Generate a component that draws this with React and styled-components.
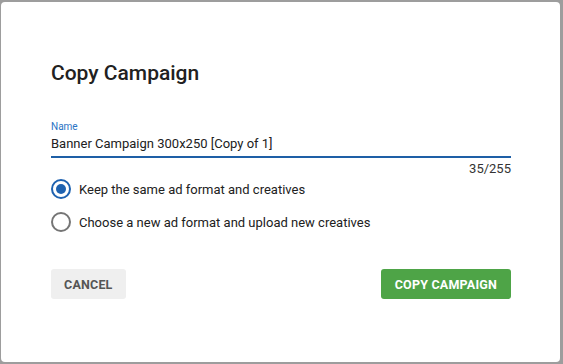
import React, { useState } from "react";
import styled, { createGlobalStyle } from "styled-components";

const GlobalStyle = createGlobalStyle`
  html, body {
    margin: 0;
    padding: 0;
    background: #9d9d9d;
    font-family: Roboto, "Liberation Sans", sans-serif;
  }
`;

const Backdrop = styled.div`
  width: 563px;
  height: 364px;
  padding: 2px 3px 2px 1px;
  box-sizing: border-box;
`;

const Dialog = styled.div`
  width: 100%;
  height: 100%;
  background: #fff;
  border-radius: 4px;
  box-sizing: border-box;
  padding: 57px 49px 0 50px;
  display: flex;
  flex-direction: column;
`;

const Title = styled.h2`
  margin: 0;
  font-size: 21px;
  line-height: 28px;
  font-weight: 500;
  color: #212121;
`;

const Field = styled.div`
  margin-top: 34px;
  display: flex;
  flex-direction: column;
`;

const Label = styled.label`
  font-size: 10px;
  line-height: 12px;
  color: #2b73c4;
`;

const Input = styled.input`
  border: none;
  border-bottom: 2px solid #1e5fa6;
  padding: 2px 0 4px;
  font-family: inherit;
  font-size: 13px;
  line-height: 17px;
  color: #212121;
  outline: none;
  background: transparent;
`;

const Counter = styled.div`
  align-self: flex-end;
  font-size: 13px;
  line-height: 15px;
  margin-top: 3px;
  color: #333;
`;

const Options = styled.div`
  display: flex;
  flex-direction: column;
  gap: 13px;
  margin-top: 3px;
`;

const Option = styled.label`
  display: flex;
  align-items: center;
  gap: 8px;
  font-size: 13px;
  color: #212121;
  cursor: pointer;
`;

const Radio = styled.span`
  width: 20px;
  height: 20px;
  box-sizing: border-box;
  border-radius: 50%;
  border: 2px solid ${(p) => (p.checked ? "#1e62b0" : "#757575")};
  display: flex;
  align-items: center;
  justify-content: center;
  &::after {
    content: "";
    width: 10px;
    height: 10px;
    border-radius: 50%;
    background: #1e62b0;
    display: ${(p) => (p.checked ? "block" : "none")};
  }
`;

const Actions = styled.div`
  display: flex;
  justify-content: space-between;
  margin-top: 37px;
`;

const Button = styled.button`
  height: 30px;
  padding: 0 ${(p) => (p.primary ? "14px" : "13px")};
  border: none;
  border-radius: 3px;
  font-family: inherit;
  font-size: 12.5px;
  font-weight: 700;
  letter-spacing: 0.2px;
  text-transform: uppercase;
  background: ${(p) => (p.primary ? "#4ea447" : "#efefef")};
  color: ${(p) => (p.primary ? "#fff" : "#555")};
  cursor: pointer;
`;

const options = [
  "Keep the same ad format and creatives",
  "Choose a new ad format and upload new creatives",
];

export default function App() {
  const [name, setName] = useState("Banner Campaign 300x250 [Copy of 1]");
  const [choice, setChoice] = useState(0);

  return (
    <>
      <GlobalStyle />
      <Backdrop>
        <Dialog>
          <Title>Copy Campaign</Title>
          <Field>
            <Label>Name</Label>
            <Input value={name} onChange={(e) => setName(e.target.value)} />
            <Counter>{name.length}/255</Counter>
          </Field>
          <Options>
            {options.map((text, i) => (
              <Option key={i} onClick={() => setChoice(i)}>
                <Radio checked={choice === i} />
                {text}
              </Option>
            ))}
          </Options>
          <Actions>
            <Button>Cancel</Button>
            <Button primary>Copy Campaign</Button>
          </Actions>
        </Dialog>
      </Backdrop>
    </>
  );
}
